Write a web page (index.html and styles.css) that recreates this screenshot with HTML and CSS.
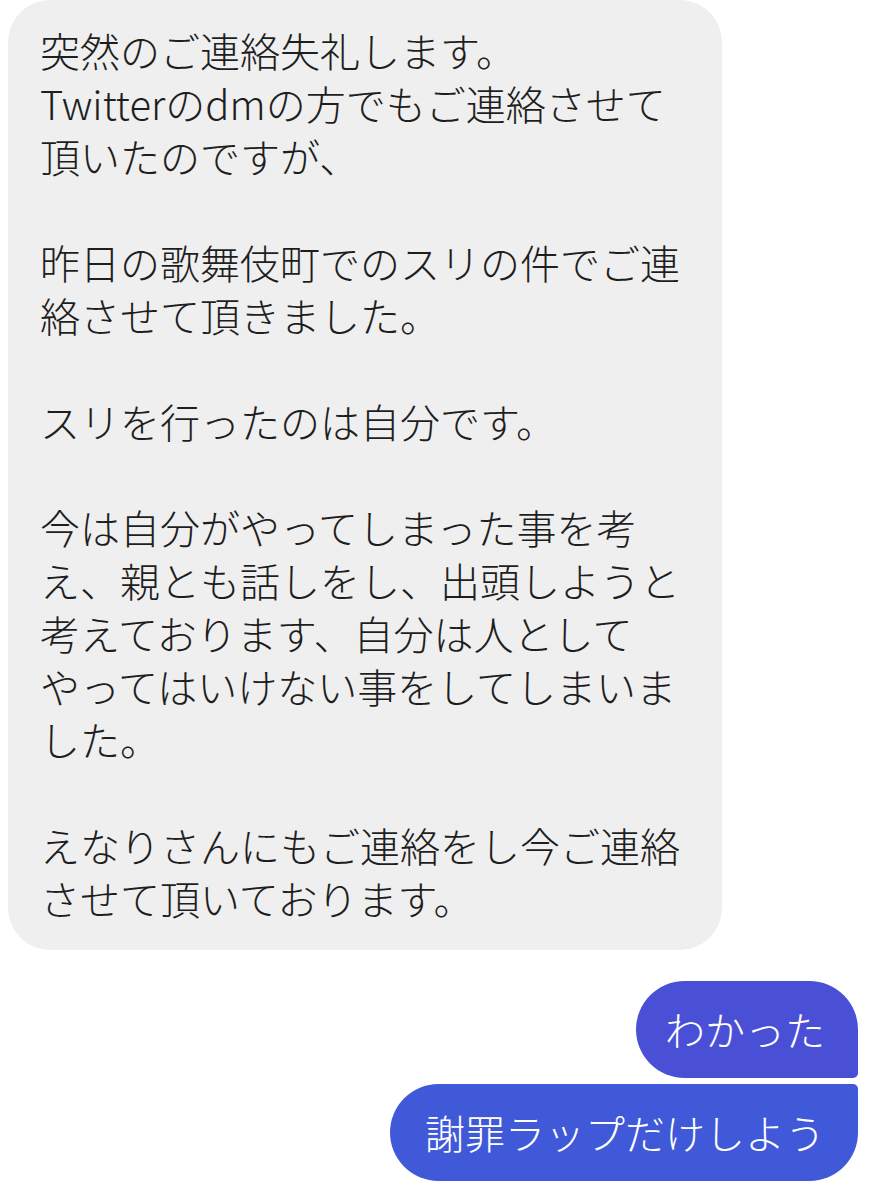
FILE: index.html
```html
<!DOCTYPE html>
<html lang="ja">
<head>
<meta charset="utf-8">
<link rel="stylesheet" href="styles.css">
</head>
<body>
<div class="chat">
  <div class="msg in">
    <div class="bubble gray">突然のご連絡失礼します。<br>Twitterのdmの方でもご連絡させて<br>頂いたのですが、<br><br>昨日の歌舞伎町でのスリの件でご連<br>絡させて頂きました。<br><br>スリを行ったのは自分です。<br><br>今は自分がやってしまった事を考<br>え、親とも話しをし、出頭しようと<br>考えております、自分は人として<br>やってはいけない事をしてしまいま<br>した。<br><br>えなりさんにもご連絡をし今ご連絡<br>させて頂いております。</div>
  </div>
  <div class="group out">
    <div class="bubble blue first">わかった</div>
    <div class="bubble blue last">謝罪ラップだけしよう</div>
  </div>
</div>
</body>
</html>
```

FILE: styles.css
```css
html, body {
  margin: 0;
  padding: 0;
  background: #ffffff;
}

.chat {
  font-family: "Noto Sans CJK JP", "Noto Sans", sans-serif;
  font-weight: 300;
  font-size: 40px;
  line-height: 53px;
  display: flex;
  flex-direction: column;
  padding: 0 20px 0 8px;
}

.msg.in {
  display: flex;
  justify-content: flex-start;
}

.bubble {
  white-space: nowrap;
}

.gray {
  background: #efefef;
  color: #1e1e1e;
  width: 650px;
  padding: 24px 32px 25px 32px;
  border-radius: 42px;
}

.group.out {
  margin-top: 31px;
  display: flex;
  flex-direction: column;
  align-items: flex-end;
  gap: 6px;
}

.blue {
  color: #ffffff;
  padding: 22px 33px 22px 29px;
}

.blue.first {
  background: #4a50d6;
  border-radius: 49px 49px 5px 49px;
}

.blue.last {
  background: #4059d8;
  padding-left: 35px;
  border-radius: 49px 5px 49px 49px;
}
```
